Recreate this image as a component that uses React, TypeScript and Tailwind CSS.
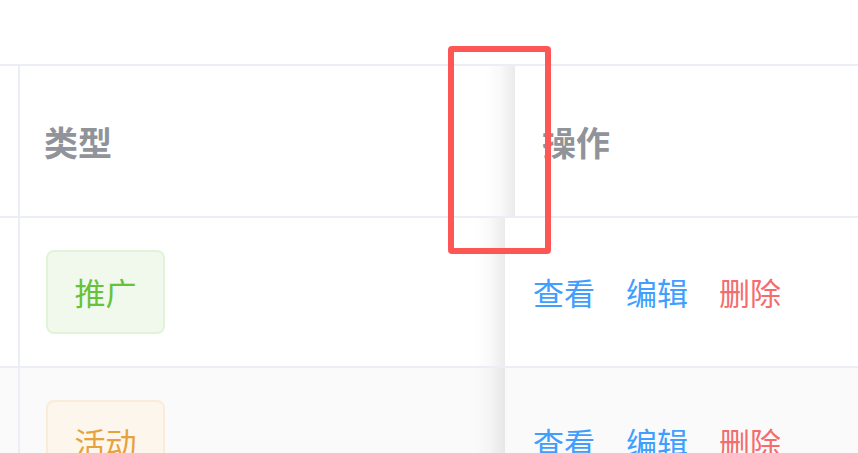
const rows = [
  { type: "推广", tone: "green" },
  { type: "活动", tone: "orange" },
];

const tagTone: Record<string, string> = {
  green: "bg-[#f0f9eb] border-[#e1f3d8] text-[#67c23a]",
  orange: "bg-[#fdf6ec] border-[#faecd8] text-[#e6a23c]",
};

function FixedShadow() {
  return (
    <div className="pointer-events-none absolute top-0 bottom-0 right-full w-[30px] bg-gradient-to-l from-[rgba(0,0,0,0.08)] via-[rgba(0,0,0,0.025)] to-transparent" />
  );
}

export default function App() {
  return (
    <div
      className="relative w-[858px] h-[453px] overflow-hidden bg-white pt-[64px]"
      style={{ fontFamily: '"Noto Sans CJK SC", "Noto Sans", sans-serif' }}
    >
      {/* header */}
      <div className="flex h-[154px] border-y-2 border-[#ebeef5]">
        <div className="w-[20px] shrink-0 border-r-2 border-[#ebeef5]" />
        <div className="flex-1 flex items-center pl-[24px] text-[34px] font-bold text-[#909399]">类型</div>
        <div className="relative w-[343px] shrink-0 flex items-center pl-[27px] bg-white text-[34px] font-bold text-[#909399]">
          <FixedShadow />
          操作
        </div>
      </div>

      {/* body */}
      {rows.map((row, i) => (
        <div
          key={row.type}
          className={`flex h-[150px] border-b-2 border-[#ebeef5] ${i % 2 ? "bg-[#fafafa]" : "bg-white"}`}
        >
          <div className="w-[20px] shrink-0 border-r-2 border-[#ebeef5]" />
          <div className="flex-1 flex items-center pl-[26px]">
            <span
              className={`flex items-center justify-center w-[119px] h-[84px] border-2 rounded-[8px] text-[31px] ${tagTone[row.tone]}`}
            >
              {row.type}
            </span>
          </div>
          <div
            className={`relative w-[353px] shrink-0 flex items-center gap-[31px] pl-[28px] text-[31px] ${
              i % 2 ? "bg-[#fafafa]" : "bg-white"
            }`}
          >
            <FixedShadow />
            <span className="text-[#409eff]">查看</span>
            <span className="text-[#409eff]">编辑</span>
            <span className="text-[#f56c6c]">删除</span>
          </div>
        </div>
      ))}

      {/* annotation box */}
      <div className="absolute left-[448px] top-[46px] w-[103px] h-[208px] border-[6px] border-[#fe5555] rounded-[4px]" />
    </div>
  );
}
